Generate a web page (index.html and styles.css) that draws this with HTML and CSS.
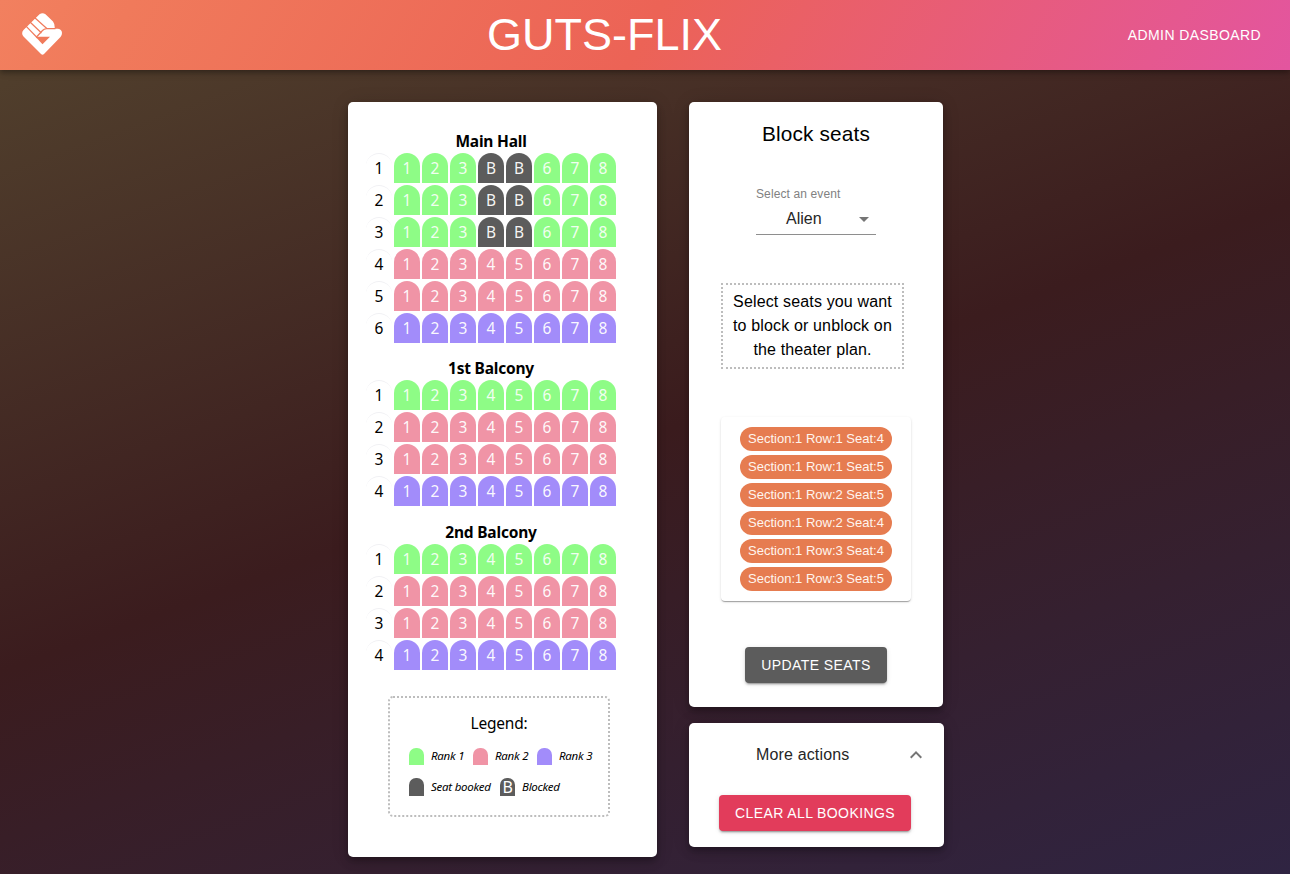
FILE: index.html
```html
<!DOCTYPE html>
<html lang="en">
<head>
<meta charset="utf-8">
<title>GUTS-FLIX</title>
<link rel="stylesheet" href="styles.css">
</head>
<body>
<header class="topbar">
  <svg class="logo" viewBox="0 0 40 43">
    <path fill="#fff" d="M17.500 1.300Q20.500-1 23.500 1.300L31 8.500Q33 11 32.700 15.800H36Q40 16.500 40 20Q40 22.500 38.500 24L22 41Q20.500 42.500 19 41L1.500 23.500Q-1.200 20 1.500 17Z"/>
    <path fill="#f07a5b" d="M13.500 23.800L17.500 23.800H28L20.500 31.300Z"/>
    <path fill="none" stroke="#f07a5b" stroke-width="1.200" d="M12.500 4.500L24.800 15.500M8 9L19.500 20M4 13.200L15.500 25M33.500 15.600H24.500Q22 15.800 20.500 17.500L14.500 24"/>
  </svg>
  <h1 class="brand">GUTS-FLIX</h1>
  <a class="admin">ADMIN DASBOARD</a>
</header>
<main class="content">
  <section class="card plan">
    <div id="halls" class="halls"></div>
    <div class="legend">
      <div class="legend-title">Legend:</div>
      <div class="legend-row">
        <span class="swatch rank1"></span><em class="w1">Rank 1</em>
        <span class="swatch rank2"></span><em class="w1">Rank 2</em>
        <span class="swatch rank3"></span><em>Rank 3</em>
      </div>
      <div class="legend-row second">
        <span class="swatch blocked"></span><em class="w2">Seat booked</em>
        <span class="swatch blocked">B</span><em>Blocked</em>
      </div>
    </div>
  </section>
  <div class="side">
    <section class="card block">
      <h2 class="block-title">Block seats</h2>
      <div class="select">
        <label class="select-label">Select an event</label>
        <div class="select-value"><span>Alien</span><i class="caret"></i></div>
      </div>
      <p class="hint">Select seats you want<br>to block or unblock on<br>the theater plan.</p>
      <div class="chips">
        <span class="chip">Section:1 Row:1 Seat:4</span>
        <span class="chip">Section:1 Row:1 Seat:5</span>
        <span class="chip">Section:1 Row:2 Seat:5</span>
        <span class="chip">Section:1 Row:2 Seat:4</span>
        <span class="chip">Section:1 Row:3 Seat:4</span>
        <span class="chip">Section:1 Row:3 Seat:5</span>
      </div>
      <button class="btn update">UPDATE SEATS</button>
    </section>
    <section class="card more">
      <div class="more-head"><span>More actions</span>
        <svg class="chevron" viewBox="0 0 24 24" fill="#757575"><path d="M12 8l-6 6 1.410 1.410L12 10.830l4.590 4.580L18 14z"/></svg>
      </div>
      <button class="btn clear">CLEAR ALL BOOKINGS</button>
    </section>
  </div>
</main>
<script src="script.js"></script>
</body>
</html>
```
FILE: styles.css
```css
* { box-sizing: border-box; }
body {
  margin: 0;
  height: 874px;
  overflow: hidden;
  font-family: "Liberation Sans", Arial, sans-serif;
  background: linear-gradient(160deg, #53432e 0%, #3b1c1e 50%, #2f2442 100%);
}
.topbar {
  position: relative;
  height: 70px;
  padding: 0 29px 0 22px;
  display: grid;
  grid-template-columns: 180px 1fr 254px;
  align-items: center;
  color: #fff;
  background: linear-gradient(120deg, #f2805f 0%, #f07a5b 10%, #ec6356 50%, #e3559f 100%);
  box-shadow: 0 2px 4px -1px rgba(0,0,0,.2), 0 4px 5px rgba(0,0,0,.14), 0 1px 10px rgba(0,0,0,.12);
}
.logo { width: 40px; height: 43px; margin-top: -2px; }
.brand { margin: 0; font-size: 45px; font-weight: 400; line-height: 70px; text-align: center; }
.admin { font-size: 14px; letter-spacing: .4px; text-align: right; }
.content { display: flex; gap: 32px; padding: 32px 0 0 348px; align-items: flex-start; }
.card {
  background: #fff;
  border-radius: 5px;
  box-shadow: 0 3px 5px -1px rgba(0,0,0,.2), 0 6px 10px rgba(0,0,0,.14), 0 1px 18px rgba(0,0,0,.12);
}
.plan { width: 309px; height: 755px; padding: 27px 40px 0 18px; font-family: "Noto Sans", sans-serif; }
.halls { width: 250px; display: flex; flex-direction: column; gap: 13px; }
.hall:last-child { padding-top: 1px; }
.hall-title { margin: 0; height: 24px; line-height: 24px; font-size: 15.500px; letter-spacing: -.2px; text-align: center; }
.rows { display: flex; flex-direction: column; gap: 2px; }
.row { display: grid; grid-template-columns: repeat(9, 26px); gap: 2px; }
.seat {
  height: 30px;
  line-height: 31px;
  border-radius: 13px 13px 0 0;
  font-size: 15.500px;
  text-align: center;
  color: rgba(255,255,255,.95);
}
.label { color: #000; border-top: 1px solid #f1f1f4; line-height: 29px; }
.rank1 { background: #8efc86; }
.seat.rank1 { color: rgba(255,255,255,.9); }
.rank2 { background: #f094a6; }
.rank3 { background: #a28cfa; }
.blocked { background: #5c5c5c; }
.legend {
  margin: 26px 0 0 22px;
  width: 222px;
  height: 121px;
  padding: 13px 0 0 19px;
  border: 2px dotted #bdbdbd;
  border-radius: 5px;
}
.legend-title { height: 24px; line-height: 24px; font-size: 15.500px; letter-spacing: -.2px; text-align: center; padding-right: 19px; }
.legend-row { display: flex; margin-top: 13px; height: 17px; line-height: 16px; font-size: 11.500px; letter-spacing: -.25px; }
.legend-row.second { margin-top: 13px; height: 18px; line-height: 17px; }
.legend-row em { margin-left: 7px; white-space: nowrap; }
.w1 { width: 42px; }
.w2 { width: 69px; }
.swatch { flex: none; width: 15px; border-radius: 7px 7px 0 0; color: #fff; font-size: 16px; line-height: 18px; text-align: center; }
.side { display: flex; flex-direction: column; gap: 16px; }
.block { width: 254px; height: 605px; padding-left: 32px; }
.block-title { margin: 16px 0 0; width: 190px; height: 32px; line-height: 32px; font-size: 20.800px; font-weight: 400; letter-spacing: .16px; text-align: center; }
.select { margin: 36px 0 0 35px; width: 120px; height: 49px; border-bottom: 1px solid #8e8e8e; }
.select-label { display: block; font-size: 12px; line-height: 16px; letter-spacing: .12px; color: #818181; }
.select-value { display: flex; align-items: center; justify-content: space-between; padding: 0 7px 0 30px; height: 33px; font-size: 16px; color: #262626; }
.caret { margin-top: 2px; border: 5px solid transparent; border-top-color: #757575; border-bottom: 0; }
.hint { margin: 48px 0 0; width: 183px; height: 86px; padding-top: 5px; border: 2px dotted #bdbdbd; font-size: 16px; line-height: 24px; letter-spacing: .15px; text-align: center; }
.chips {
  margin-top: 48px;
  width: 190px;
  height: 184px;
  padding-top: 10px;
  display: flex;
  flex-direction: column;
  align-items: center;
  gap: 4px;
  border-radius: 4px;
  box-shadow: 0 2px 1px -1px rgba(0,0,0,.2), 0 1px 1px rgba(0,0,0,.14), 0 1px 3px rgba(0,0,0,.12);
}
.chip { width: 152px; height: 24px; line-height: 23px; border-radius: 12px; background: #e67c50; color: #fff5ee; font-size: 13px; text-align: center; white-space: nowrap; }
.btn {
  display: block;
  height: 36px;
  padding: 0;
  border: 0;
  border-radius: 4px;
  color: #fff;
  font: 14px/36px "Liberation Sans", Arial, sans-serif;
  letter-spacing: .4px;
  box-shadow: 0 3px 1px -2px rgba(0,0,0,.2), 0 2px 2px rgba(0,0,0,.14), 0 1px 5px rgba(0,0,0,.12);
}
.update { margin: 46px 0 0 24px; width: 142px; background: #5c5c5c; }
.more { width: 255px; height: 124px; padding-left: 30px; }
.more-head { display: flex; align-items: center; justify-content: space-between; height: 64px; padding: 0 16px 0 37px; font-size: 16px; letter-spacing: .15px; color: #262626; }
.chevron { width: 24px; height: 24px; }
.clear { margin-top: 8px; width: 192px; background: #e23c5b; }
```
FILE: script.js
```js
const halls = [
  { name: "Main Hall", ranks: [1, 1, 1, 2, 2, 3], blocked: ["1-4", "1-5", "2-4", "2-5", "3-4", "3-5"] },
  { name: "1st Balcony", ranks: [1, 2, 2, 3], blocked: [] },
  { name: "2nd Balcony", ranks: [1, 2, 2, 3], blocked: [] }
];

const seat = (row, rank, number, blocked) => {
  const taken = blocked.includes(`${row}-${number}`);
  return `<span class="seat ${taken ? "blocked" : "rank" + rank}">${taken ? "B" : number}</span>`;
};

document.getElementById("halls").innerHTML = halls.map(hall => `
  <div class="hall">
    <h3 class="hall-title">${hall.name}</h3>
    <div class="rows">${hall.ranks.map((rank, i) => `
      <div class="row"><span class="seat label">${i + 1}</span>${
        [1, 2, 3, 4, 5, 6, 7, 8].map(n => seat(i + 1, rank, n, hall.blocked)).join("")
      }</div>`).join("")}
    </div>
  </div>`).join("");
```
